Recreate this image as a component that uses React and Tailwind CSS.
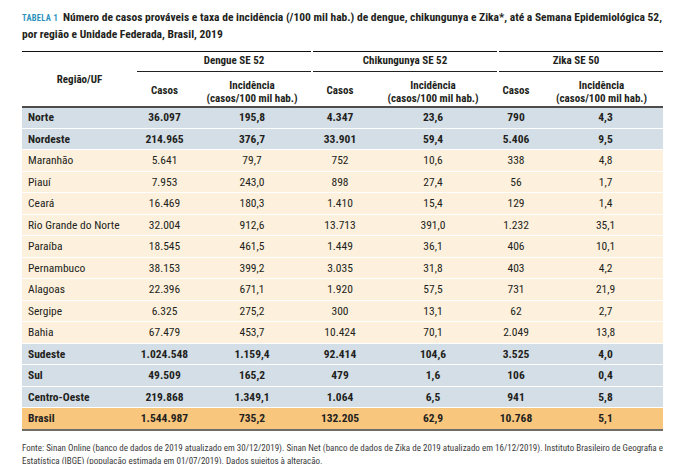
const FONT = { fontFamily: '"Roboto Condensed", "Open Sans", sans-serif' };

const rows = [
  { name: "Norte", v: ["36.097", "195,8", "4.347", "23,6", "790", "4,3"], kind: "region" },
  { name: "Nordeste", v: ["214.965", "376,7", "33.901", "59,4", "5.406", "9,5"], kind: "region" },
  { name: "Maranhão", v: ["5.641", "79,7", "752", "10,6", "338", "4,8"], kind: "state" },
  { name: "Piauí", v: ["7.953", "243,0", "898", "27,4", "56", "1,7"], kind: "state" },
  { name: "Ceará", v: ["16.469", "180,3", "1.410", "15,4", "129", "1,4"], kind: "state" },
  { name: "Rio Grande do Norte", v: ["32.004", "912,6", "13.713", "391,0", "1.232", "35,1"], kind: "state" },
  { name: "Paraíba", v: ["18.545", "461,5", "1.449", "36,1", "406", "10,1"], kind: "state" },
  { name: "Pernambuco", v: ["38.153", "399,2", "3.035", "31,8", "403", "4,2"], kind: "state" },
  { name: "Alagoas", v: ["22.396", "671,1", "1.920", "57,5", "731", "21,9"], kind: "state" },
  { name: "Sergipe", v: ["6.325", "275,2", "300", "13,1", "62", "2,7"], kind: "state" },
  { name: "Bahia", v: ["67.479", "453,7", "10.424", "70,1", "2.049", "13,8"], kind: "state" },
  { name: "Sudeste", v: ["1.024.548", "1.159,4", "92.414", "104,6", "3.525", "4,0"], kind: "region" },
  { name: "Sul", v: ["49.509", "165,2", "479", "1,6", "106", "0,4"], kind: "region" },
  { name: "Centro-Oeste", v: ["219.868", "1.349,1", "1.064", "6,5", "941", "5,8"], kind: "region" },
  { name: "Brasil", v: ["1.544.987", "735,2", "132.205", "62,9", "10.768", "5,1"], kind: "total" },
];

const rowStyle = {
  region: "bg-[#d4dee7] font-bold",
  state: "bg-[#fdf0dc]",
  total: "bg-[#f9c67d] font-bold",
};

function IncHead() {
  return (
    <th className="font-bold leading-[13px] pt-[6px] align-middle">
      Incidência
      <br />
      (casos/100 mil hab.)
    </th>
  );
}

export default function App() {
  return (
    <div className="w-[684px] h-[464px] bg-white pl-[22px] pt-[9px] text-[#231f20]" style={FONT}>
      <p className="text-[11.5px] font-bold leading-[16px] whitespace-nowrap">
        <span className="text-[#2b93bd] text-[8.5px] mr-[5px] tracking-[0.3px]">TABELA 1</span>
        Número de casos prováveis e taxa de incidência (/100 mil hab.) de dengue, chikungunya e Zika*, até a Semana Epidemiológica 52,
        <br />
        por região e Unidade Federada, Brasil, 2019
      </p>

      <table className="table-fixed border-collapse w-[641px] mt-[9px] border-t-[1.5px] border-t-[#111] text-[11.5px]">
        <colgroup>
          <col className="w-[115px]" />
          <col className="w-[55px]" />
          <col className="w-[120px]" />
          <col className="w-[56px]" />
          <col className="w-[130px]" />
          <col className="w-[42px]" />
          <col className="w-[123px]" />
        </colgroup>
        <thead className="border-b-2 border-b-[#4d4d4d] text-[11px]">
          <tr className="h-[20px]">
            <th rowSpan={2} className="font-bold align-middle pt-[2px]">Região/UF</th>
            <th colSpan={2} className="font-bold border-b border-b-[#222] pl-[20px]">Dengue SE 52</th>
            <th colSpan={2} className="font-bold border-b border-b-[#222] border-l-2 border-l-white">Chikungunya SE 52</th>
            <th colSpan={2} className="font-bold border-b border-b-[#222] border-l-2 border-l-white pr-[10px]">Zika SE 50</th>
          </tr>
          <tr className="h-[35px]">
            <th className="font-bold pt-[4px]">Casos</th>
            <IncHead />
            <th className="font-bold pt-[4px]">Casos</th>
            <IncHead />
            <th className="font-bold pt-[4px] pr-[6px]">Casos</th>
            <IncHead />
          </tr>
        </thead>
        <tbody>
          {rows.map((r) => (
            <tr key={r.name} className={`h-[21.5px] border-b border-b-white ${rowStyle[r.kind]}`}>
              <td className="pl-[6px] pt-[1px]">{r.name}</td>
              {r.v.map((x, i) => (
                <td key={i} className={`text-center pt-[1px] ${i === 4 ? "pr-[6px]" : ""} ${i === 5 ? "pl-[8px]" : ""}`}>
                  {x}
                </td>
              ))}
            </tr>
          ))}
        </tbody>
      </table>
      <div className="w-[641px] h-[2px] bg-[#6d6d6d] -mt-[1px]" />

      <p className="mt-[11px] w-[641px] text-[9px] leading-[13px] text-[#3a3a3a] text-justify [text-align-last:left]">
        Fonte: Sinan Online (banco de dados de 2019 atualizado em 30/12/2019). Sinan Net (banco de dados de Zika de 2019 atualizado em 16/12/2019). Instituto Brasileiro de Geografia e Estatística (IBGE) (população estimada em 01/07/2019). Dados sujeitos à alteração.
      </p>
    </div>
  );
}
